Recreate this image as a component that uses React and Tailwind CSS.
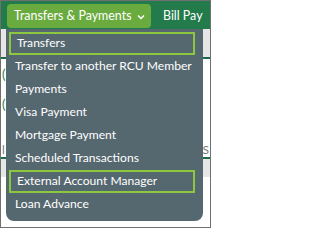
import React from "react";

const items = [
  { label: "Transfers", active: true },
  { label: "Transfer to another RCU Member" },
  { label: "Payments" },
  { label: "Visa Payment" },
  { label: "Mortgage Payment" },
  { label: "Scheduled Transactions" },
  { label: "External Account Manager", active: true },
  { label: "Loan Advance" },
];

export default function App() {
  return (
    <div
      className="relative w-[211px] h-[228px] border border-[#6f6f6f] bg-white overflow-hidden"
      style={{ fontFamily: "Lato, 'Open Sans', sans-serif" }}
    >
      {/* nav */}
      <div className="h-[28px] bg-[#237a4b] flex items-start pt-[3px] pl-[6px]">
        <div className="h-[24px] w-[144px] rounded-[4px] bg-[#6aab3f] flex items-center pl-[7px] text-white text-[12.4px]">
          <span>Transfers &amp; Payments</span>
          <svg width="8" height="6" viewBox="0 0 8 6" className="ml-[5px] mt-[1px]">
            <path d="M1 1.5 L4 4.5 L7 1.5" stroke="white" strokeWidth="1.4" fill="none" />
          </svg>
        </div>
        <div className="ml-[12px] h-[24px] flex items-center text-white text-[12.4px]">Bill Pay</div>
      </div>
      {/* page content behind */}
      <div className="h-[28px] bg-[#e6e6e6]" />
      <div className="h-[2px] bg-[#1d6b44]" />
      <div className="h-[66px] bg-white flex flex-col pl-[1px] pt-[8px] text-[#2a7a4a] text-[13px] leading-[14px]">
        <span>(</span>
        <span className="mt-[16px]">(</span>
      </div>
      <div className="h-[32px] bg-white flex items-end justify-between px-[1px] text-[#777] text-[12px] leading-[14px]">
        <span>l</span>
        <span>S</span>
      </div>
      <div className="h-[2px] bg-[#1d6b44] mt-[0px]" />
      <div className="h-[18px] bg-[#e6e6e6]" />

      {/* dropdown */}
      <div className="absolute left-[5px] top-[28px] w-[197px] h-[192px] bg-[#56686f] rounded-b-[8px] pt-[3px] pl-[3px] pr-[8px]">
        {items.map((it) => (
          <div
            key={it.label}
            className={`h-[23px] flex items-center pl-[6px] text-white text-[12.1px] whitespace-nowrap ${
              it.active ? "border-2 border-[#8dc63f] pl-[4px]" : ""
            }`}
          >
            {it.label}
          </div>
        ))}
      </div>
    </div>
  );
}
